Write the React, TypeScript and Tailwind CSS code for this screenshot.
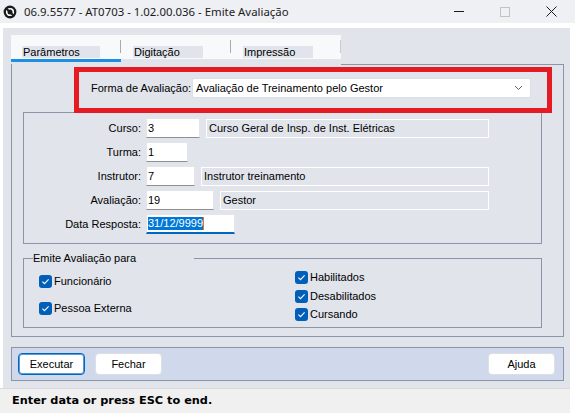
import React from "react";

function Logo() {
  return (
    <svg width="14" height="14" viewBox="0 0 14 14" className="ml-[1px] mt-[1px]">
      <circle cx="7" cy="7" r="6.4" fill="#1b1b1b" />
      <circle cx="7" cy="7" r="3.3" fill="none" stroke="#ffffff" strokeWidth="1.6" />
      <path d="M3.2 3.6 L10.6 10.6" stroke="#1b1b1b" strokeWidth="2" />
    </svg>
  );
}

function Check({ label }: { label: string }) {
  return (
    <div className="flex items-center gap-[2px] h-[13px]">
      <span className="w-[13px] h-[13px] rounded-[3px] bg-[#005fb8] flex items-center justify-center shrink-0">
        <svg width="13" height="13" viewBox="0 0 13 13">
          <path d="M3.4 6.7 L5.5 8.7 L9.6 4.4" fill="none" stroke="#ffffff" strokeWidth="1.1" />
        </svg>
      </span>
      <span className="leading-[13px]">{label}</span>
    </div>
  );
}

function Input({ w, value }: { w: string; value: string }) {
  return (
    <div
      className={`${w} h-[20px] bg-white border border-[#e3e5ea] border-b-[#8f8f8f] flex items-center pl-[1px] shrink-0`}
    >
      {value}
    </div>
  );
}

function Display({ value }: { value?: string }) {
  return (
    <div className="flex-1 h-[19px] border border-white flex items-center pl-[2px]">
      {value}
    </div>
  );
}

function Row({
  label,
  children,
}: {
  label: string;
  children: React.ReactNode;
}) {
  return (
    <div className="flex items-center h-[20px] w-[465px]">
      <div className="w-[118px] text-right pr-[1px] shrink-0">{label}</div>
      <div className="ml-[4px] flex items-center gap-[6px] flex-1">{children}</div>
    </div>
  );
}

function Button({ label, focused }: { label: string; focused?: boolean }) {
  return (
    <div
      className={`w-[67px] h-[22px] bg-white rounded-[4px] flex items-center justify-center ${
        focused
          ? "border border-[#0067c0] shadow-[inset_0_0_0_1px_#5a9ad8]"
          : "border border-[#dcdfe4]"
      }`}
    >
      {label}
    </div>
  );
}

export default function App() {
  return (
    <div className="w-[575px] h-[413px] bg-white overflow-hidden flex flex-col font-['Liberation_Sans',Arial,sans-serif] text-[11px] text-black">
      {/* Title bar */}
      <div className="h-[23px] bg-[#eff0f4] flex items-center shrink-0">
        <div className="ml-[1px] w-[16px] flex justify-center">
          <Logo />
        </div>
        <span className="ml-[7px] text-[11.4px] text-[#1b1b1b] font-['Noto_Sans',sans-serif]">
          06.9.5577 - AT0703 - 1.02.00.036 - Emite Avaliação
        </span>
        <div className="ml-auto flex items-center h-full">
          <div className="w-[46px] h-full flex items-center justify-center">
            <div className="w-[10px] h-[1px] bg-[#1b1b1b]" />
          </div>
          <div className="w-[46px] h-full flex items-center justify-center">
            <div className="w-[10px] h-[10px] border border-[#c2c2c2]" />
          </div>
          <div className="w-[46px] h-full flex items-center justify-center mr-[1px]">
            <svg width="11" height="11" viewBox="0 0 11 11">
              <path d="M0.5 0.5 L10.5 10.5 M10.5 0.5 L0.5 10.5" stroke="#1b1b1b" strokeWidth="1" />
            </svg>
          </div>
        </div>
      </div>
      <div className="h-[5px] shrink-0" />
      {/* Content */}
      <div className="ml-[3px] w-[567px] h-[360px] bg-[#e1e4eb] flex flex-col pt-[7px] px-[8px] shrink-0">
        {/* Tabs */}
        <div className="flex flex-col">
          <div className="w-[330px] h-[24px] bg-[#f8f9fb] flex">
            <div className="w-[109px] h-full flex items-end pb-[1px]">
              <div className="ml-[11px] w-[78px] h-[12px] bg-[#e1e4eb] leading-[12px] pl-[1px]">
                Parâmetros
              </div>
            </div>
            <div className="w-[1px] h-[13px] mt-[5px] bg-[#a9abb0]" />
            <div className="w-[109px] h-full flex items-end pb-[1px]">
              <div className="ml-[12px] w-[70px] h-[12px] bg-[#e1e4eb] leading-[12px] pl-[1px]">
                Digitação
              </div>
            </div>
            <div className="w-[1px] h-[13px] mt-[5px] bg-[#a9abb0]" />
            <div className="w-[109px] h-full flex items-end pb-[1px]">
              <div className="ml-[12px] w-[70px] h-[12px] bg-[#e1e4eb] leading-[12px] pl-[1px]">
                Impressão
              </div>
            </div>
            <div className="w-[1px] h-[13px] mt-[5px] bg-[#c9cbd0]" />
          </div>
          <div className="w-[110px] h-[3px] bg-[#1a8fe3]" />
        </div>
        {/* Main panel */}
        <div className="mt-[2px] w-[553px] h-[273px] border-x border-b border-[#8c95a5] flex flex-col">
          <div className="flex h-[1px] shrink-0">
            <div className="w-[329px]" />
            <div className="flex-1 border-t border-[#8c95a5]" />
          </div>
          {/* Red highlight */}
          <div className="relative z-10 mt-[2px] ml-[62px] w-[478px] h-[46px] border-[5px] border-[#e51a22] shrink-0">
            <div className="mt-[6px] flex items-center h-[20px]">
              <span className="ml-[12px] w-[101px]">Forma de Avaliação:</span>
              <div className="ml-[0px] w-[339px] h-[20px] bg-white border border-[#dcdfe4] rounded-[2px] flex items-center pl-[3px] pr-[7px]">
                <span className="flex-1">Avaliação de Treinamento pelo Gestor</span>
                <svg width="9" height="6" viewBox="0 0 9 6">
                  <path d="M1 1 L4.5 4.5 L8 1" fill="none" stroke="#5f5f5f" strokeWidth="1" />
                </svg>
              </div>
            </div>
          </div>
          {/* Group 1 */}
          <div className="-mt-[1px] ml-[11px] w-[519px] h-[132px] border border-[#8c95a5] pt-[5px] flex flex-col gap-[4px] shrink-0">
            <Row label="Curso:">
              <Input w="w-[54px]" value="3" />
              <Display value="Curso Geral de Insp. de Inst. Elétricas" />
            </Row>
            <Row label="Turma:">
              <Input w="w-[42px]" value="1" />
            </Row>
            <Row label="Instrutor:">
              <Input w="w-[49px]" value="7" />
              <Display value="Instrutor treinamento" />
            </Row>
            <Row label="Avaliação:">
              <Input w="w-[68px]" value="19" />
              <Display value="Gestor" />
            </Row>
            <Row label="Data Resposta:">
              <div className="w-[89px] h-[20px] bg-white border border-[#e3e5ea] border-b-2 border-b-[#0067c0] flex items-center pl-[1px] shrink-0">
                <span className="bg-[#0078d7] text-white leading-[13px]">31/12/9999</span>
                <span className="w-[1px] h-[13px] bg-[#e07a1a]" />
              </div>
            </Row>
          </div>
          {/* Group 2 */}
          <fieldset className="mt-[8px] ml-[11px] w-[519px] h-[76px] border border-[#8c95a5] flex shrink-0">
            <legend className="ml-[9px] w-[161px] leading-[13px]">Emite Avaliação para</legend>
            <div className="flex w-full">
              <div className="w-[271px] pl-[15px] pt-[10px] flex flex-col gap-[14px]">
                <Check label="Funcionário" />
                <Check label="Pessoa Externa" />
              </div>
              <div className="pt-[6px] flex flex-col gap-[5.5px]">
                <Check label="Habilitados" />
                <Check label="Desabilitados" />
                <Check label="Cursando" />
              </div>
            </div>
          </fieldset>
        </div>
        {/* Button bar */}
        <div className="mt-[10px] w-[553px] h-[34px] bg-[#d0d9eb] border border-[#8c95a5] flex items-center px-[6px]">
          <Button label="Executar" focused />
          <div className="ml-[10px]">
            <Button label="Fechar" />
          </div>
          <div className="ml-auto mr-[2px]">
            <Button label="Ajuda" />
          </div>
        </div>
      </div>
      {/* Status bar */}
      <div className="w-[570px] flex-1 bg-[#f0f0f0] border-t border-[#d9d9d9] flex items-center pl-[12px] font-bold text-[11.3px] font-['DejaVu_Sans',sans-serif]">
        Enter data or press ESC to end.
      </div>
    </div>
  );
}
